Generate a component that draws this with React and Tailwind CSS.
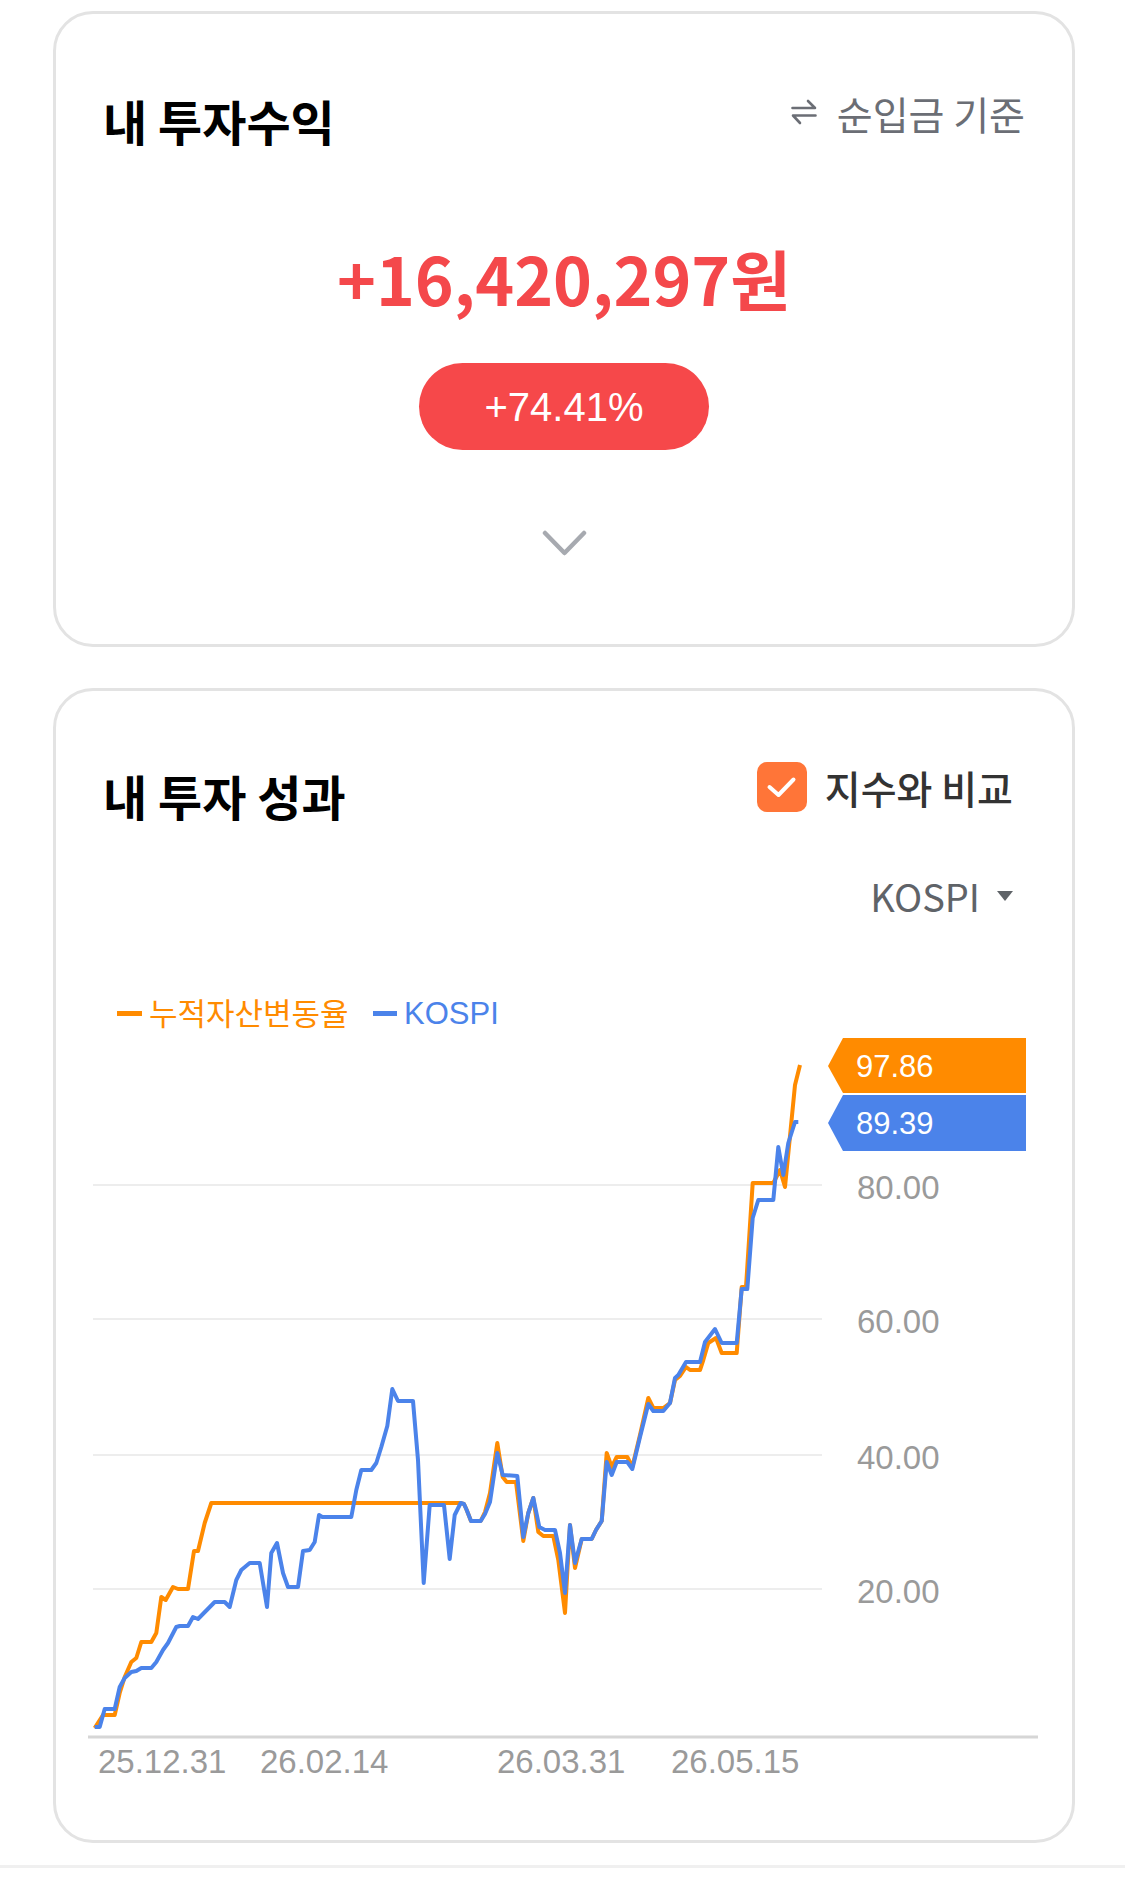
const ORANGE =
  "94.7,1728 103,1715 114.7,1715 119.7,1693 124.7,1677 131.3,1662 136.3,1658 141.3,1642 151.3,1642 156.3,1633 161.3,1597 165.7,1600 173,1587 178,1589 188,1589 194,1551 198,1551 204.7,1523 211.3,1503 216.3,1503 460,1503 464,1504 466.7,1510 471,1521 480.7,1521 485,1512 490,1493 497.3,1443 502.7,1477 506.7,1482 516,1482 523.3,1541 528.3,1513 533.3,1498 538.3,1532 543.3,1536 553.3,1536 558.3,1560 565,1613 570,1525 575,1568 581.7,1539 591.7,1539 596,1530 601.7,1521 606.7,1453 611.7,1467 616.7,1457 627.3,1457 632.3,1467 640,1435 648.3,1398 653.3,1408 663.3,1408 670,1403 675,1380 680,1376 686,1367 690,1370 700,1370 703.3,1360 708.3,1343 716,1338 721.7,1353 736.7,1353 741.7,1287 746,1287 752.7,1183 773.3,1183 780,1170 785,1187 795,1085 800,1065";

const BLUE =
  "94.7,1727 99.7,1727 104.7,1709 114.7,1709 119.7,1687 124.7,1678 131.3,1672 136.3,1671 141.3,1668 151.3,1668 156.3,1662 163,1650 168,1643 176.3,1627 179.7,1626 188,1626 193,1617 198,1619 214.7,1602 224.7,1602 229.7,1607 236.3,1580 241.3,1570 249.7,1563 259.7,1563 267,1607 271.3,1553 277,1543 283,1573 288,1587 298,1587 303,1551 309.7,1550 314.7,1542 319,1515 322.3,1517 351.3,1517 356.3,1490 361.3,1470 371.3,1470 376.3,1463 381.3,1447 387.3,1426 392.3,1389 398,1401 413,1401 418,1460 423.7,1583 429.7,1505 444,1505 449.7,1559 454.7,1515 460.7,1503 464,1504 466.7,1510 471,1521 480.7,1521 485,1514 490,1502 497.3,1453 502.7,1475 517.3,1476 523.3,1537 528.3,1513 533.3,1498 539.3,1527 545,1530 555,1530 560,1553 565,1593 570,1525 575,1563 581.7,1539 591.7,1539 596,1530 601.7,1521 606.7,1462 611.7,1475 616.7,1462 627.3,1462 632.3,1469 640,1437 648.3,1404 653.3,1411 663.3,1411 670,1403 675,1378 678.3,1375 686,1362 700,1362 705,1342 715,1329 721.7,1343 736.7,1343 741.7,1289 747.3,1289 752.7,1218 758.3,1200 773.3,1200 778.3,1147 783.3,1175 788.3,1143 795,1122 798.3,1122";

const GRID = [
  { y: 1185, label: "80.00" },
  { y: 1319, label: "60.00" },
  { y: 1455, label: "40.00" },
  { y: 1589, label: "20.00" },
];

const X_LABELS = [
  { x: 98, label: "25.12.31" },
  { x: 260, label: "26.02.14" },
  { x: 497, label: "26.03.31" },
  { x: 671, label: "26.05.15" },
];

const NUM_FONT = "Liberation Sans, Arial, sans-serif";
const KR_FONT = "Noto Sans CJK KR, sans-serif";

function PerformanceChart() {
  return (
    <svg width="952" height="820" viewBox="88 980 952 820" className="block">
      {/* legend */}
      <rect x="117" y="1011" width="25" height="5" fill="#ff8b00" />
      <text x="149" y="1025" fontSize="31" fill="#ff8b00" fontFamily={KR_FONT}>
        누적자산변동율
      </text>
      <rect x="373" y="1011" width="24" height="5" fill="#4b83ea" />
      <text x="404" y="1024" fontSize="31" fill="#4b83ea" fontFamily={NUM_FONT}>
        KOSPI
      </text>

      {/* grid */}
      {GRID.map((g) => (
        <g key={g.y}>
          <line x1="93" x2="822" y1={g.y} y2={g.y} stroke="#ededed" strokeWidth="2" />
          <text x="857" y={g.y + 14} fontSize="33" fill="#9a9a9a" fontFamily={NUM_FONT}>
            {g.label}
          </text>
        </g>
      ))}
      <line x1="88" x2="1038" y1="1737" y2="1737" stroke="#d6d6d6" strokeWidth="3" />
      {X_LABELS.map((l) => (
        <text key={l.x} x={l.x} y="1773" fontSize="33" fill="#9a9a9a" fontFamily={NUM_FONT}>
          {l.label}
        </text>
      ))}

      {/* series */}
      <polyline points={ORANGE} fill="none" stroke="#ff8b00" strokeWidth="4" strokeLinejoin="round" />
      <polyline points={BLUE} fill="none" stroke="#4b83ea" strokeWidth="4" strokeLinejoin="round" />

      {/* last value tags */}
      <polygon points="828,1066 843,1038 1026,1038 1026,1093 843,1093" fill="#ff8b00" />
      <text x="856" y="1077" fontSize="31" fill="#fff" fontFamily={NUM_FONT}>
        97.86
      </text>
      <polygon points="828,1123 843,1095 1026,1095 1026,1151 843,1151" fill="#4b83ea" />
      <text x="856" y="1134" fontSize="31" fill="#fff" fontFamily={NUM_FONT}>
        89.39
      </text>
    </svg>
  );
}

export default function App() {
  return (
    <div className="w-[1125px] min-h-[1899px] bg-white pt-[11px] font-['Noto_Sans_CJK_KR',sans-serif]">
      {/* 투자수익 */}
      <section className="ml-[53px] h-[636px] w-[1022px] rounded-[40px] border-[3px] border-[#e3e3e3] px-[47px] pt-[78px]">
        <div className="flex items-start justify-between">
          <h2 className="text-[48px] leading-[56px] font-bold text-black">내 투자수익</h2>
          <button className="-mt-[2px] flex items-center gap-[20px] text-[39px] leading-[46px] text-[#6b6e75]">
            <svg width="26" height="28" viewBox="0 0 26 28" fill="none" stroke="#6b6e75" strokeWidth="2.6" strokeLinecap="round" strokeLinejoin="round">
              <path d="M1.5 9H24L17 2" />
              <path d="M24.5 16.5H2L9 24" />
            </svg>
            순입금 기준
          </button>
        </div>

        <div className="mt-[91px] text-center text-[66px] leading-[76px] font-bold text-[#f4484b]">
          +16,420,297원
        </div>

        <div className="mt-[48px] flex justify-center">
          <div className="flex h-[87px] w-[290px] items-center justify-center rounded-[44px] bg-[#f6484a] font-['Liberation_Sans',Arial,sans-serif] text-[40px] text-white">
            +74.41%
          </div>
        </div>

        <div className="mt-[79px] flex justify-center">
          <svg width="45" height="28" viewBox="0 0 45 28" fill="none" stroke="#a7aab0" strokeWidth="4.5" strokeLinecap="round" strokeLinejoin="round">
            <path d="M3 4L22.5 24L42 4" />
          </svg>
        </div>
      </section>

      {/* 투자 성과 */}
      <section className="ml-[53px] mt-[41px] h-[1155px] w-[1022px] rounded-[40px] border-[3px] border-[#e3e3e3] pt-[76px]">
        <div className="flex items-start justify-between px-[47px]">
          <h2 className="text-[48px] leading-[56px] font-bold text-black">내 투자 성과</h2>
          <label className="-mt-[5px] mr-[12px] flex items-center gap-[18px]">
            <span className="flex h-[50px] w-[50px] items-center justify-center rounded-[10px] bg-[#ff7538]">
              <svg width="50" height="50" viewBox="0 0 50 50" fill="none" stroke="#fff" strokeWidth="4" strokeLinecap="round" strokeLinejoin="round">
                <path d="M12.5 25L21.5 33L36.5 17.5" />
              </svg>
            </span>
            <span className="text-[39px] leading-[50px] font-medium text-[#333]">지수와 비교</span>
          </label>
        </div>

        <div className="mt-[50px] flex justify-end pr-[59px]">
          <button className="flex items-center gap-[17px] text-[38px] leading-[46px] text-[#5f6368]">
            KOSPI
            <svg width="16" height="10" viewBox="0 0 16 10">
              <path d="M0 0H16L8 10Z" fill="#5f6368" />
            </svg>
          </button>
        </div>

        <div className="mt-[61px] pl-[32px]">
          <PerformanceChart />
        </div>
      </section>

      <div className="mt-[22px] h-[3px] bg-[#f0f0f0]" />
    </div>
  );
}
